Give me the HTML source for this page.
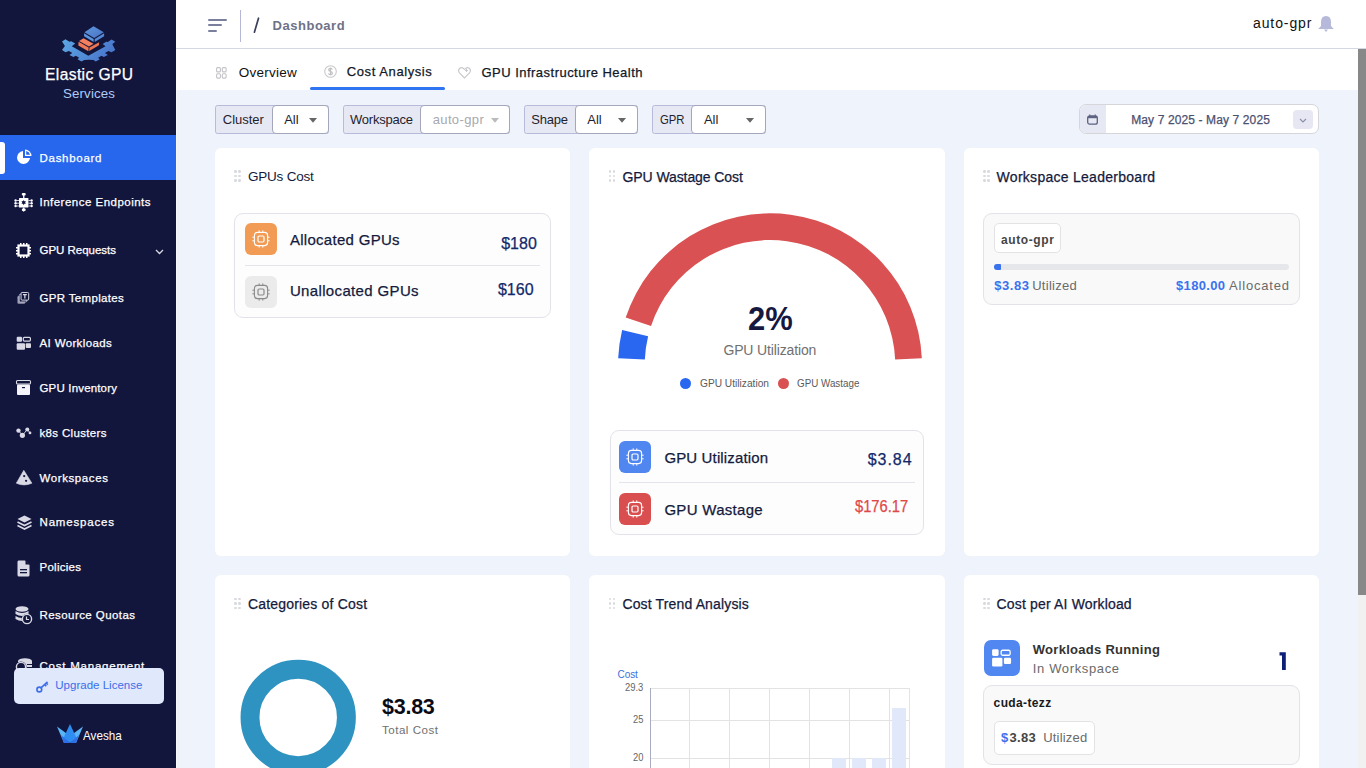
<!DOCTYPE html>
<html><head><meta charset="utf-8"><style>
html,body{margin:0;padding:0;width:1366px;height:768px;overflow:hidden;background:#eef3fc;font-family:"Liberation Sans",sans-serif;}
.t{position:absolute;line-height:1;white-space:nowrap;-webkit-text-stroke:0.25px currentColor;}
.thin{-webkit-text-stroke:0;}
.b{position:absolute;box-sizing:border-box;}
svg{position:absolute;overflow:visible;}
</style></head><body>
<div class="b" style="left:0px;top:0px;width:176px;height:768px;background:#13163c"></div>
<div class="b" style="left:176px;top:0px;width:1px;height:768px;background:#f7f9fd"></div>
<svg style="left:58px;top:22px" width="64" height="44" viewBox="0 0 1117 768">
<defs><linearGradient id="lg1" x1="0" y1="0" x2="1" y2="0.3"><stop offset="0" stop-color="#5ca6e4"/><stop offset="1" stop-color="#4a78cc"/></linearGradient>
<linearGradient id="lg2" x1="0" y1="0" x2="1" y2="1"><stop offset="0" stop-color="#5e98de"/><stop offset="1" stop-color="#4a72c4"/></linearGradient></defs>
<path d="M70 340 L130 300 L200 345 L230 335 L300 375 L240 425 L530 590 L830 425 L780 385 L840 345 L870 350 L935 305 L1000 345 L950 385 L955 400 L1000 490 L935 530 L880 505 L820 540 L870 575 L800 610 L760 590 L700 625 L730 650 L660 690 L620 665 L540 660 L460 665 L410 690 L340 650 L370 625 L310 590 L270 610 L200 575 L250 540 L190 505 L130 530 L70 490 L120 420 L110 400 Z" fill="url(#lg1)"/>
<path d="M360 345 L535 445 L530 510 L355 410 Z" fill="#f07a55"/>
<path d="M548 445 L718 352 L715 405 L545 505 Z" fill="#ea7350"/>
<path d="M368 330 L445 282 L620 378 L540 428 Z" fill="#f58060"/>
<path d="M455 195 L622 295 L622 350 L455 250 Z" fill="#5b94dc"/>
<path d="M640 295 L805 198 L805 250 L640 350 Z" fill="#5288d6"/>
<path d="M462 178 L620 72 L798 178 L632 280 Z" fill="url(#lg2)"/>
</svg>
<div class="t" style="left:45.00px;top:67.44px;font-size:15.6px;font-weight:400;color:#ffffff;letter-spacing:0.390px;">Elastic GPU</div>
<div class="t thin" style="left:63.00px;top:87.29px;font-size:13.3px;font-weight:400;color:#b0cbf6;letter-spacing:0.143px;">Services</div>
<div class="b" style="left:0px;top:135px;width:176px;height:45px;background:#2667ee"></div>
<div class="b" style="left:0px;top:142px;width:5px;height:32px;background:#ffffff;border-radius:0 3px 3px 0"></div>
<svg style="left:16px;top:149px" width="16" height="16" viewBox="0 0 16 16">
<path d="M7 2 A6.5 6.5 0 1 0 14 9 L7 9 Z" fill="#fff"/>
<path d="M9 0.5 L9 7 L15.5 7 A6.5 6.5 0 0 0 9 0.5 Z" fill="#fff"/>
<path d="M10.2 1.9 L10.2 5.8 L14.1 5.8 A5.3 5.3 0 0 0 10.2 1.9 Z" fill="#2667ee"/>
</svg>
<div class="t" style="left:39.50px;top:152.92px;font-size:11.5px;font-weight:400;color:#ffffff;letter-spacing:0.713px;">Dashboard</div>
<div class="t" style="left:39.50px;top:197.32px;font-size:11.5px;font-weight:400;color:#ffffff;letter-spacing:0.483px;">Inference Endpoints</div>
<div class="t" style="left:39.50px;top:244.72px;font-size:11.5px;font-weight:400;color:#ffffff;letter-spacing:-0.018px;">GPU Requests</div>
<div class="t" style="left:39.50px;top:292.62px;font-size:11.5px;font-weight:400;color:#ffffff;letter-spacing:0.333px;">GPR Templates</div>
<div class="t" style="left:39.50px;top:337.93px;font-size:11.5px;font-weight:400;color:#ffffff;letter-spacing:0.364px;">AI Workloads</div>
<div class="t" style="left:39.50px;top:382.93px;font-size:11.5px;font-weight:400;color:#ffffff;letter-spacing:0.167px;">GPU Inventory</div>
<div class="t" style="left:39.50px;top:427.93px;font-size:11.5px;font-weight:400;color:#ffffff;letter-spacing:0.336px;">k8s Clusters</div>
<div class="t" style="left:39.50px;top:473.03px;font-size:11.5px;font-weight:400;color:#ffffff;letter-spacing:0.600px;">Workspaces</div>
<div class="t" style="left:39.50px;top:517.23px;font-size:11.5px;font-weight:400;color:#ffffff;letter-spacing:0.822px;">Namespaces</div>
<div class="t" style="left:39.50px;top:561.93px;font-size:11.5px;font-weight:400;color:#ffffff;letter-spacing:0.271px;">Policies</div>
<div class="t" style="left:39.50px;top:610.13px;font-size:11.5px;font-weight:400;color:#ffffff;letter-spacing:0.429px;">Resource Quotas</div>
<div class="t" style="left:39.50px;top:661.43px;font-size:11.5px;font-weight:400;color:#ffffff;letter-spacing:0.771px;">Cost Management</div>
<svg style="left:14px;top:193px" width="19" height="19" viewBox="0 0 19 19">
<rect x="5" y="5" width="9.4" height="9.6" rx="0.6" fill="#fff"/>
<path d="M9.7 6.9 L10.4 8.2 L11.8 8.1 L11.2 9.5 L11.9 10.8 L10.4 10.8 L9.7 12.2 L9 10.8 L7.5 10.8 L8.2 9.5 L7.5 8.1 L9 8.2 Z" fill="#13163c"/>
<rect x="7.8" y="0" width="3.9" height="2.5" rx="1" fill="#fff"/><rect x="9.1" y="2" width="1.3" height="3" fill="#fff"/>
<rect x="9.1" y="14.5" width="1.3" height="1.5" fill="#fff"/><rect x="7.8" y="15.6" width="3.9" height="2.4" rx="1.1" fill="#fff"/><path d="M8.9 17.8 L9.75 19 L10.6 17.8 Z" fill="#fff"/>
<circle cx="1.6" cy="7.5" r="1.2" fill="#fff"/><circle cx="1.6" cy="10.2" r="1.2" fill="#fff"/><circle cx="1.6" cy="13" r="1.2" fill="#fff"/>
<circle cx="17.6" cy="7.5" r="1.2" fill="#fff"/><circle cx="17.6" cy="10.2" r="1.2" fill="#fff"/><circle cx="17.6" cy="13" r="1.2" fill="#fff"/>
<path d="M2.6 7.5 H5 M2.8 10.2 H5 M2.6 13 H5 M16.6 7.5 H14.4 M16.4 10.2 H14.4 M16.6 13 H14.4" stroke="#fff" stroke-width="0.8"/>
</svg>
<svg style="left:16px;top:243px" width="15" height="15" viewBox="0 0 15 15">
<rect x="2.5" y="2.5" width="10" height="10" fill="none" stroke="#ffffff" stroke-width="2.2"/>
<rect x="4" y="0" width="1.5" height="2" fill="#ffffff"/><rect x="7" y="0" width="1.5" height="2" fill="#ffffff"/><rect x="10" y="0" width="1.5" height="2" fill="#ffffff"/>
<rect x="4" y="13" width="1.5" height="2" fill="#ffffff"/><rect x="7" y="13" width="1.5" height="2" fill="#ffffff"/><rect x="10" y="13" width="1.5" height="2" fill="#ffffff"/>
<rect x="0" y="4" width="2" height="1.5" fill="#ffffff"/><rect x="0" y="7" width="2" height="1.5" fill="#ffffff"/><rect x="0" y="10" width="2" height="1.5" fill="#ffffff"/>
<rect x="13" y="4" width="2" height="1.5" fill="#ffffff"/><rect x="13" y="7" width="2" height="1.5" fill="#ffffff"/><rect x="13" y="10" width="2" height="1.5" fill="#ffffff"/>
</svg>
<svg style="left:155px;top:249px" width="9" height="6" viewBox="0 0 9 6"><path d="M1 1 L4.5 4.5 L8 1" fill="none" stroke="#d9d9e6" stroke-width="1.3"/></svg>
<svg style="left:17px;top:291.5px" width="12.6" height="13" viewBox="0 0 14 14.4">
<rect x="0.5" y="4.5" width="8.5" height="8.5" rx="1.2" fill="#9c9cb4"/>
<rect x="2.5" y="2.5" width="8.5" height="8.5" rx="1.2" fill="#13163c" stroke="#b8b8cc" stroke-width="1"/>
<rect x="4.5" y="0.5" width="8.5" height="8.5" rx="1.2" fill="#13163c" stroke="#d9d9e6" stroke-width="1.1"/>
<path d="M6.6 3 H10.9 M8.75 3 V7.2" stroke="#d9d9e6" stroke-width="1.4"/>
</svg>
<svg style="left:16px;top:336px" width="16" height="15" viewBox="0 0 16 15">
<rect x="0.7" y="0.7" width="5.3" height="5" rx="1" fill="#d9d9e6"/>
<rect x="7.3" y="1.3" width="7.1" height="3.8" rx="1" fill="none" stroke="#d9d9e6" stroke-width="1.2"/>
<rect x="0.7" y="7.2" width="8.3" height="6.6" rx="1" fill="#d9d9e6"/>
<rect x="9.7" y="7.2" width="5.3" height="4.8" rx="1" fill="#d9d9e6"/>
</svg>
<svg style="left:16px;top:380px" width="15" height="15" viewBox="0 0 15 15">
<rect x="0.5" y="0.5" width="14" height="3.5" rx="1" fill="none" stroke="#d9d9e6" stroke-width="1.1"/>
<rect x="1" y="4.5" width="13" height="10.5" rx="1" fill="#f4f4fa"/>
<rect x="6" y="7" width="3" height="1.2" fill="#13163c"/>
</svg>
<svg style="left:16px;top:427px" width="16" height="12" viewBox="0 0 16 12">
<path d="M2.5 3.6 L6.4 8.3 L11.3 2.4 L14 5.9" fill="none" stroke="#d9d9e6" stroke-width="0.9"/>
<circle cx="2.5" cy="3.6" r="2.2" fill="#d9d9e6"/><circle cx="6.4" cy="8.3" r="2.6" fill="#d9d9e6"/><circle cx="11.3" cy="2.4" r="2" fill="#d9d9e6"/><circle cx="14" cy="5.9" r="1.4" fill="#d9d9e6"/>
</svg>
<svg style="left:15.5px;top:469.5px" width="16" height="16" viewBox="0 0 16 16">
<path d="M7.8 0.3 L15.9 13.2 Q8 16.6 0.3 13.2 Z" fill="#d9d9e6" stroke="#d9d9e6" stroke-width="0.6" stroke-linejoin="round"/>
<circle cx="8.2" cy="6.1" r="1.15" fill="#13163c"/><circle cx="10.1" cy="10.8" r="1.15" fill="#13163c"/>
</svg>
<svg style="left:16.5px;top:514.5px" width="15" height="15" viewBox="0 0 15 15">
<path d="M7.5 0.5 L14.5 4 L7.5 7.5 L0.5 4 Z" fill="#d9d9e6"/>
<path d="M0.5 7 L7.5 10.5 L14.5 7" fill="none" stroke="#d9d9e6" stroke-width="1.6"/>
<path d="M0.5 10.5 L7.5 14 L14.5 10.5" fill="none" stroke="#d9d9e6" stroke-width="1.6"/>
</svg>
<svg style="left:17px;top:559.5px" width="13" height="17" viewBox="0 0 13 17">
<path d="M1.5 0.5 H8 L12.5 5 V15 Q12.5 16.5 11 16.5 H2 Q0.5 16.5 0.5 15 V2 Q0.5 0.5 1.5 0.5 Z" fill="#d9d9e6"/>
<path d="M8.5 0.5 V4.5 H12.5" fill="#13163c"/>
<rect x="3" y="9" width="7" height="1.3" fill="#13163c"/><rect x="3" y="12" width="7" height="1.3" fill="#13163c"/>
</svg>
<svg style="left:14.5px;top:606px" width="18" height="19" viewBox="0 0 18 19">
<ellipse cx="7" cy="3" rx="6.5" ry="2.8" fill="#d9d9e6"/>
<path d="M0.5 5 Q7 9 13.5 5 V8 Q7 12 0.5 8 Z" fill="#d9d9e6"/>
<path d="M0.5 10 Q7 14 13.5 10 V13 Q7 17 0.5 13 Z" fill="#d9d9e6"/>
<circle cx="12" cy="13" r="5.3" fill="#13163c"/>
<circle cx="12" cy="13" r="4.6" fill="none" stroke="#d9d9e6" stroke-width="1.4"/>
<path d="M11.5 10.5 V13.5 H14" fill="none" stroke="#d9d9e6" stroke-width="1.2"/>
</svg>
<svg style="left:15px;top:658px" width="18" height="12" viewBox="0 0 18 12">
<ellipse cx="10" cy="3" rx="7" ry="2.8" fill="#d9d9e6"/>
<rect x="3" y="3" width="14" height="9" fill="#d9d9e6"/>
<circle cx="6" cy="9" r="5.5" fill="#13163c"/><circle cx="6" cy="9" r="4.6" fill="none" stroke="#d9d9e6" stroke-width="1.4"/>
<rect x="12" y="6" width="5" height="1" fill="#13163c"/><rect x="12" y="9" width="5" height="1" fill="#13163c"/>
</svg>
<div class="b" style="left:14px;top:668px;width:150px;height:36px;background:#e0e8fc;border-radius:5px"></div>
<svg style="left:35.5px;top:680.5px" width="13" height="12" viewBox="0 0 13 12">
<circle cx="3.3" cy="8.5" r="2.4" fill="none" stroke="#3b6ee8" stroke-width="1.6"/>
<path d="M5 6.8 L11.5 0.8 M8.5 3.5 L10.3 5.3 M10.2 2 L11.8 3.6" fill="none" stroke="#3b6ee8" stroke-width="1.6"/>
</svg>
<div class="t thin" style="left:55.30px;top:680.02px;font-size:11.5px;font-weight:400;color:#3b6ee8;letter-spacing:0.007px;">Upgrade License</div>
<svg style="left:56.5px;top:723.5px" width="26" height="20" viewBox="0 0 26 20">
<path d="M0 2.5 L7 19 L13 12 Z" fill="#5ab4f5"/>
<path d="M26 2.5 L19 19 L13 12 Z" fill="#5ab4f5"/>
<path d="M13 0 L6.5 14 L13 19 L19.5 14 Z" fill="#2f8cf0"/>
<path d="M4 11 L13 19 L22 11 L19 19 H7 Z" fill="#2f6fe8"/>
</svg>
<div class="t thin" style="left:82.50px;top:728.95px;font-size:13px;font-weight:400;color:#ffffff;letter-spacing:0.000px;transform:scaleX(0.8981);transform-origin:0.00px 0;">Avesha</div>
<div class="b" style="left:176px;top:0px;width:1190px;height:48px;background:#ffffff"></div>
<div class="b" style="left:176px;top:48px;width:1190px;height:1px;background:#d5d8e2"></div>
<div class="b" style="left:208px;top:18.6px;width:19px;height:2px;background:#7b7f9e;border-radius:1.5px"></div>
<div class="b" style="left:208px;top:24.1px;width:14px;height:2px;background:#7b7f9e;border-radius:1.5px"></div>
<div class="b" style="left:208px;top:29.5px;width:9.3px;height:2px;background:#7b7f9e;border-radius:1.5px"></div>
<div class="b" style="left:240px;top:10px;width:1px;height:32px;background:#b4b8d4"></div>
<svg style="left:252px;top:16px" width="9" height="18" viewBox="0 0 9 18"><path d="M6.5 2.2 L2.4 16.2" stroke="#3a3f5c" stroke-width="1.7" stroke-linecap="round"/></svg>
<div class="t thin" style="left:272.60px;top:18.95px;font-size:13px;font-weight:700;color:#6e7287;letter-spacing:0.512px;">Dashboard</div>
<div class="t thin" style="left:1253.00px;top:15.90px;font-size:14px;font-weight:400;color:#111111;letter-spacing:0.900px;">auto-gpr</div>
<svg style="left:1318px;top:16px" width="16" height="16" viewBox="0 0 16 16">
<path d="M8 0 Q3 0 3 6 V10 L0.2 13 H15.8 L13 10 V6 Q13 0 8 0 Z" fill="#b6b9da"/>
<path d="M6 13.5 H10 L8 16 Z" fill="#b6b9da"/>
</svg>
<div class="b" style="left:176px;top:49px;width:1182px;height:41px;background:#ffffff"></div>
<svg style="left:215.5px;top:67px" width="11" height="12" viewBox="0 0 11 12">
<rect x="0.6" y="0.6" width="3.8" height="4.3" rx="1" fill="none" stroke="#c4c4c8" stroke-width="1.1"/>
<rect x="6.3" y="0.6" width="3.8" height="4.3" rx="1" fill="none" stroke="#c4c4c8" stroke-width="1.1"/>
<rect x="0.6" y="6.8" width="3.8" height="4.3" rx="1" fill="none" stroke="#c4c4c8" stroke-width="1.1"/>
<rect x="6.3" y="6.8" width="3.8" height="4.3" rx="1" fill="none" stroke="#c4c4c8" stroke-width="1.1"/>
</svg>
<div class="t thin" style="left:238.70px;top:65.93px;font-size:13.5px;font-weight:400;color:#111111;letter-spacing:0.243px;">Overview</div>
<svg style="left:323.5px;top:64.5px" width="13" height="13" viewBox="0 0 13 13">
<circle cx="6.5" cy="6.5" r="5.8" fill="none" stroke="#c9c9cd" stroke-width="1.1"/>
<path d="M8.3 4.6 Q8 3.4 6.5 3.4 Q4.7 3.4 4.7 4.8 Q4.7 6 6.5 6.4 Q8.4 6.9 8.4 8.2 Q8.4 9.6 6.5 9.6 Q4.8 9.6 4.5 8.3 M6.5 2.4 V10.6" fill="none" stroke="#bfbfc4" stroke-width="1.2"/>
</svg>
<div class="t" style="left:346.80px;top:64.75px;font-size:13px;font-weight:400;color:#111827;letter-spacing:0.583px;">Cost Analysis</div>
<div class="b" style="left:310px;top:87px;width:135px;height:3px;background:#2f74f0;border-radius:2px"></div>
<svg style="left:457.5px;top:67px" width="13" height="12" viewBox="0 0 13 12">
<path d="M6.5 11 L1.5 6 Q-0.5 3.5 1.5 1.5 Q4 -0.5 6.5 2.5 Q9 -0.5 11.5 1.5 Q13.5 3.5 11.5 6 Z" fill="none" stroke="#c8c8cc" stroke-width="1.1"/>
<path d="M8.5 2 V5 M7 3.5 H10" stroke="#c8c8cc" stroke-width="1"/>
</svg>
<div class="t" style="left:481.50px;top:66.15px;font-size:13px;font-weight:400;color:#111827;letter-spacing:0.475px;">GPU Infrastructure Health</div>
<div class="b" style="left:1358px;top:49px;width:8px;height:719px;background:#f1f1f1"></div>
<div class="b" style="left:1358px;top:49px;width:8px;height:546px;background:#888888"></div>
<div class="b" style="left:215px;top:105px;width:114px;height:28.5px;background:#e6e8f3;border:1px solid #b8badb;border-radius:2.5px"></div>
<div class="b" style="left:271.5px;top:105px;width:57.5px;height:28.5px;background:#ffffff;border:1px solid #a4a6bc;border-radius:4px"></div>
<div class="t thin" style="left:222.80px;top:112.75px;font-size:13px;font-weight:400;color:#1e1e2e;letter-spacing:-0.033px;">Cluster</div>
<div class="t thin" style="left:284.20px;top:112.75px;font-size:13px;font-weight:400;color:#1e1e2e;letter-spacing:-0.050px;">All</div>
<svg style="left:309.4px;top:117.5px" width="8" height="5" viewBox="0 0 8 5"><path d="M0 0 H8 L4 4.8 Z" fill="#666666"/></svg>
<div class="b" style="left:343px;top:105px;width:167px;height:28.5px;background:#e6e8f3;border:1px solid #b8badb;border-radius:2.5px"></div>
<div class="b" style="left:420px;top:105px;width:90px;height:28.5px;background:#ffffff;border:1px solid #a4a6bc;border-radius:4px"></div>
<div class="t thin" style="left:350.00px;top:112.75px;font-size:13px;font-weight:400;color:#1e1e2e;letter-spacing:-0.225px;">Workspace</div>
<div class="t thin" style="left:432.70px;top:112.75px;font-size:13px;font-weight:400;color:#a8a8b0;letter-spacing:0.371px;">auto-gpr</div>
<svg style="left:490.5px;top:117.5px" width="8" height="5" viewBox="0 0 8 5"><path d="M0 0 H8 L4 4.8 Z" fill="#bbbbbb"/></svg>
<div class="b" style="left:524.2px;top:105px;width:114.0px;height:28.5px;background:#e6e8f3;border:1px solid #b8badb;border-radius:2.5px"></div>
<div class="b" style="left:575.3px;top:105px;width:62.90000000000009px;height:28.5px;background:#ffffff;border:1px solid #a4a6bc;border-radius:4px"></div>
<div class="t thin" style="left:531.20px;top:112.75px;font-size:13px;font-weight:400;color:#1e1e2e;letter-spacing:-0.200px;">Shape</div>
<div class="t thin" style="left:587.30px;top:112.75px;font-size:13px;font-weight:400;color:#1e1e2e;letter-spacing:-0.050px;">All</div>
<svg style="left:618.3px;top:117.5px" width="8" height="5" viewBox="0 0 8 5"><path d="M0 0 H8 L4 4.8 Z" fill="#666666"/></svg>
<div class="b" style="left:652.2px;top:105px;width:113.79999999999995px;height:28.5px;background:#e6e8f3;border:1px solid #b8badb;border-radius:2.5px"></div>
<div class="b" style="left:691.3px;top:105px;width:74.70000000000005px;height:28.5px;background:#ffffff;border:1px solid #a4a6bc;border-radius:4px"></div>
<div class="t thin" style="left:659.50px;top:112.75px;font-size:13px;font-weight:400;color:#1e1e2e;letter-spacing:0.000px;transform:scaleX(0.8688);transform-origin:0.00px 0;">GPR</div>
<div class="t thin" style="left:704.00px;top:112.75px;font-size:13px;font-weight:400;color:#1e1e2e;letter-spacing:-0.050px;">All</div>
<svg style="left:745.6px;top:117.5px" width="8" height="5" viewBox="0 0 8 5"><path d="M0 0 H8 L4 4.8 Z" fill="#666666"/></svg>
<div class="b" style="left:1079px;top:104px;width:240px;height:30px;background:#ffffff;border:1px solid #d6d6da;border-radius:7px"></div>
<div class="b" style="left:1080px;top:105px;width:26px;height:28px;background:#e6e8f3;border-radius:6px 0 0 6px"></div>
<svg style="left:1087px;top:114px" width="11" height="11" viewBox="0 0 11 11">
<rect x="0.7" y="1.8" width="9.6" height="8.4" rx="2" fill="none" stroke="#5d6282" stroke-width="1.3"/>
<rect x="1" y="2" width="9" height="2.2" fill="#5d6282"/>
<path d="M2.8 0.3 V2.5 M8.2 0.3 V2.5" stroke="#5d6282" stroke-width="0.9"/>
</svg>
<div class="t" style="left:1131.20px;top:113.90px;font-size:12px;font-weight:400;color:#4b5070;letter-spacing:0.118px;">May 7 2025 - May 7 2025</div>
<div class="b" style="left:1293px;top:110px;width:19.7px;height:18.6px;background:#e6e7f3;border-radius:4px"></div>
<svg style="left:1299px;top:117.5px" width="8" height="5" viewBox="0 0 8 5"><path d="M1 1 L4 4 L7 1" fill="none" stroke="#8a8ea8" stroke-width="1.1"/></svg>
<div class="b" style="left:215px;top:148px;width:355.3px;height:408px;background:#ffffff;border-radius:6px"></div>
<div class="b" style="left:589.3px;top:148px;width:355.3px;height:408px;background:#ffffff;border-radius:6px"></div>
<div class="b" style="left:963.7px;top:148px;width:355.3px;height:408px;background:#ffffff;border-radius:6px"></div>
<div class="b" style="left:215px;top:575px;width:355.3px;height:200px;background:#ffffff;border-radius:6px"></div>
<div class="b" style="left:589.3px;top:575px;width:355.3px;height:200px;background:#ffffff;border-radius:6px"></div>
<div class="b" style="left:963.7px;top:575px;width:355.3px;height:200px;background:#ffffff;border-radius:6px"></div>
<div class="b" style="left:234.0px;top:170.3px;width:2.6px;height:2.6px;background:#d9dbe1;border-radius:50%"></div>
<div class="b" style="left:238.4px;top:170.3px;width:2.6px;height:2.6px;background:#d9dbe1;border-radius:50%"></div>
<div class="b" style="left:234.0px;top:174.8px;width:2.6px;height:2.6px;background:#d9dbe1;border-radius:50%"></div>
<div class="b" style="left:238.4px;top:174.8px;width:2.6px;height:2.6px;background:#d9dbe1;border-radius:50%"></div>
<div class="b" style="left:234.0px;top:179.3px;width:2.6px;height:2.6px;background:#d9dbe1;border-radius:50%"></div>
<div class="b" style="left:238.4px;top:179.3px;width:2.6px;height:2.6px;background:#d9dbe1;border-radius:50%"></div>
<div class="t thin" style="left:248.00px;top:169.53px;font-size:13.5px;font-weight:400;color:#141a3c;letter-spacing:-0.213px;">GPUs Cost</div>
<div class="b" style="left:608.5px;top:170.3px;width:2.6px;height:2.6px;background:#d9dbe1;border-radius:50%"></div>
<div class="b" style="left:612.9px;top:170.3px;width:2.6px;height:2.6px;background:#d9dbe1;border-radius:50%"></div>
<div class="b" style="left:608.5px;top:174.8px;width:2.6px;height:2.6px;background:#d9dbe1;border-radius:50%"></div>
<div class="b" style="left:612.9px;top:174.8px;width:2.6px;height:2.6px;background:#d9dbe1;border-radius:50%"></div>
<div class="b" style="left:608.5px;top:179.3px;width:2.6px;height:2.6px;background:#d9dbe1;border-radius:50%"></div>
<div class="b" style="left:612.9px;top:179.3px;width:2.6px;height:2.6px;background:#d9dbe1;border-radius:50%"></div>
<div class="t" style="left:622.50px;top:169.60px;font-size:14px;font-weight:400;color:#141a3c;letter-spacing:-0.087px;">GPU Wastage Cost</div>
<div class="b" style="left:983.0px;top:170.3px;width:2.6px;height:2.6px;background:#d9dbe1;border-radius:50%"></div>
<div class="b" style="left:987.4px;top:170.3px;width:2.6px;height:2.6px;background:#d9dbe1;border-radius:50%"></div>
<div class="b" style="left:983.0px;top:174.8px;width:2.6px;height:2.6px;background:#d9dbe1;border-radius:50%"></div>
<div class="b" style="left:987.4px;top:174.8px;width:2.6px;height:2.6px;background:#d9dbe1;border-radius:50%"></div>
<div class="b" style="left:983.0px;top:179.3px;width:2.6px;height:2.6px;background:#d9dbe1;border-radius:50%"></div>
<div class="b" style="left:987.4px;top:179.3px;width:2.6px;height:2.6px;background:#d9dbe1;border-radius:50%"></div>
<div class="t" style="left:996.60px;top:169.70px;font-size:14px;font-weight:400;color:#141a3c;letter-spacing:0.275px;">Workspace Leaderboard</div>
<div class="b" style="left:234.0px;top:597.5px;width:2.6px;height:2.6px;background:#d9dbe1;border-radius:50%"></div>
<div class="b" style="left:238.4px;top:597.5px;width:2.6px;height:2.6px;background:#d9dbe1;border-radius:50%"></div>
<div class="b" style="left:234.0px;top:602.0px;width:2.6px;height:2.6px;background:#d9dbe1;border-radius:50%"></div>
<div class="b" style="left:238.4px;top:602.0px;width:2.6px;height:2.6px;background:#d9dbe1;border-radius:50%"></div>
<div class="b" style="left:234.0px;top:606.5px;width:2.6px;height:2.6px;background:#d9dbe1;border-radius:50%"></div>
<div class="b" style="left:238.4px;top:606.5px;width:2.6px;height:2.6px;background:#d9dbe1;border-radius:50%"></div>
<div class="t" style="left:248.00px;top:596.60px;font-size:14px;font-weight:400;color:#141a3c;letter-spacing:0.182px;">Categories of Cost</div>
<div class="b" style="left:608.5px;top:597.5px;width:2.6px;height:2.6px;background:#d9dbe1;border-radius:50%"></div>
<div class="b" style="left:612.9px;top:597.5px;width:2.6px;height:2.6px;background:#d9dbe1;border-radius:50%"></div>
<div class="b" style="left:608.5px;top:602.0px;width:2.6px;height:2.6px;background:#d9dbe1;border-radius:50%"></div>
<div class="b" style="left:612.9px;top:602.0px;width:2.6px;height:2.6px;background:#d9dbe1;border-radius:50%"></div>
<div class="b" style="left:608.5px;top:606.5px;width:2.6px;height:2.6px;background:#d9dbe1;border-radius:50%"></div>
<div class="b" style="left:612.9px;top:606.5px;width:2.6px;height:2.6px;background:#d9dbe1;border-radius:50%"></div>
<div class="t" style="left:622.40px;top:596.80px;font-size:14px;font-weight:400;color:#141a3c;letter-spacing:0.150px;">Cost Trend Analysis</div>
<div class="b" style="left:983.0px;top:597.5px;width:2.6px;height:2.6px;background:#d9dbe1;border-radius:50%"></div>
<div class="b" style="left:987.4px;top:597.5px;width:2.6px;height:2.6px;background:#d9dbe1;border-radius:50%"></div>
<div class="b" style="left:983.0px;top:602.0px;width:2.6px;height:2.6px;background:#d9dbe1;border-radius:50%"></div>
<div class="b" style="left:987.4px;top:602.0px;width:2.6px;height:2.6px;background:#d9dbe1;border-radius:50%"></div>
<div class="b" style="left:983.0px;top:606.5px;width:2.6px;height:2.6px;background:#d9dbe1;border-radius:50%"></div>
<div class="b" style="left:987.4px;top:606.5px;width:2.6px;height:2.6px;background:#d9dbe1;border-radius:50%"></div>
<div class="t" style="left:996.60px;top:596.70px;font-size:14px;font-weight:400;color:#141a3c;letter-spacing:0.158px;">Cost per AI Workload</div>
<div class="b" style="left:234.4px;top:213.3px;width:316.3px;height:104.5px;background:#fdfdfd;border:1px solid #e2e3ea;border-radius:9px"></div>
<div class="b" style="left:245px;top:223px;width:32px;height:32px;background:#f19b55;border-radius:6px"></div>
<svg style="left:252px;top:230px" width="18" height="18" viewBox="0 0 18 18">
<rect x="2.4" y="2.4" width="13.2" height="13.2" rx="3" fill="none" stroke="#ffffff" stroke-width="1.1"/>
<rect x="6" y="6" width="6" height="6" rx="1.2" fill="none" stroke="#ffffff" stroke-width="1.2"/>
<path d="M7.2 0.4 V2 M10.8 0.4 V2 M7.2 16 V17.6 M10.8 16 V17.6 M0.4 7.2 H2 M0.4 10.8 H2 M16 7.2 H17.6 M16 10.8 H17.6" stroke="#ffffff" stroke-width="1"/>
</svg>
<div class="t" style="left:289.90px;top:231.95px;font-size:15px;font-weight:400;color:#141a3c;letter-spacing:0.292px;">Allocated GPUs</div>
<div class="t" style="left:501.20px;top:235.70px;font-size:16px;font-weight:400;color:#13296b;letter-spacing:0.033px;">$180</div>
<div class="b" style="left:245px;top:265px;width:295px;height:1px;background:#e4e5ea"></div>
<div class="b" style="left:245px;top:275.8px;width:32px;height:32px;background:#ebebeb;border-radius:6px"></div>
<svg style="left:252px;top:282.8px" width="18" height="18" viewBox="0 0 18 18">
<rect x="2.4" y="2.4" width="13.2" height="13.2" rx="3" fill="none" stroke="#8a8a8a" stroke-width="1.1"/>
<rect x="6" y="6" width="6" height="6" rx="1.2" fill="none" stroke="#8a8a8a" stroke-width="1.2"/>
<path d="M7.2 0.4 V2 M10.8 0.4 V2 M7.2 16 V17.6 M10.8 16 V17.6 M0.4 7.2 H2 M0.4 10.8 H2 M16 7.2 H17.6 M16 10.8 H17.6" stroke="#8a8a8a" stroke-width="1"/>
</svg>
<div class="t" style="left:289.90px;top:283.35px;font-size:15px;font-weight:400;color:#141a3c;letter-spacing:0.353px;">Unallocated GPUs</div>
<div class="t" style="left:497.90px;top:281.70px;font-size:16px;font-weight:400;color:#13296b;letter-spacing:0.067px;">$160</div>
<svg style="left:0;top:0" width="1366" height="768" viewBox="0 0 1366 768">
<path d="M625.69 317.57 A152 152 0 0 1 921.83 358.14 L895.16 359.40 A125.3 125.3 0 0 0 651.04 325.96 Z" fill="#d95152"/>
<path d="M618.17 358.14 A152 152 0 0 1 622.14 330.07 L648.11 336.26 A125.3 125.3 0 0 0 644.84 359.40 Z" fill="#2a67f0"/>
</svg>
<div class="t thin" style="left:747.50px;top:301.95px;font-size:33px;font-weight:700;color:#16193f;letter-spacing:0.000px;transform:scaleX(0.9371);transform-origin:0.00px 0;">2%</div>
<div class="t thin" style="left:723.40px;top:342.70px;font-size:14px;font-weight:400;color:#707070;letter-spacing:-0.136px;">GPU Utilization</div>
<div class="b" style="left:680.1px;top:377.6px;width:11px;height:11px;background:#2a67f0;border-radius:50%"></div>
<div class="t thin" style="left:699.60px;top:378.25px;font-size:11px;font-weight:400;color:#5a5a5a;letter-spacing:0.000px;transform:scaleX(0.9249);transform-origin:0.00px 0;">GPU Utilization</div>
<div class="b" style="left:777.5px;top:377.6px;width:11px;height:11px;background:#d95152;border-radius:50%"></div>
<div class="t thin" style="left:796.90px;top:378.25px;font-size:11px;font-weight:400;color:#5a5a5a;letter-spacing:0.000px;transform:scaleX(0.8927);transform-origin:0.00px 0;">GPU Wastage</div>
<div class="b" style="left:609.6px;top:430.2px;width:314.8px;height:105.3px;background:#fdfdfd;border:1px solid #e2e3ea;border-radius:9px"></div>
<div class="b" style="left:619.2px;top:441.2px;width:32px;height:32px;background:#4f86f0;border-radius:6px"></div>
<svg style="left:626.2px;top:448.2px" width="18" height="18" viewBox="0 0 18 18">
<rect x="2.4" y="2.4" width="13.2" height="13.2" rx="3" fill="none" stroke="#ffffff" stroke-width="1.1"/>
<rect x="6" y="6" width="6" height="6" rx="1.2" fill="none" stroke="#ffffff" stroke-width="1.2"/>
<path d="M7.2 0.4 V2 M10.8 0.4 V2 M7.2 16 V17.6 M10.8 16 V17.6 M0.4 7.2 H2 M0.4 10.8 H2 M16 7.2 H17.6 M16 10.8 H17.6" stroke="#ffffff" stroke-width="1"/>
</svg>
<div class="t" style="left:664.40px;top:450.05px;font-size:15px;font-weight:400;color:#141a3c;letter-spacing:0.136px;">GPU Utilization</div>
<div class="t" style="left:867.70px;top:452.40px;font-size:16px;font-weight:400;color:#13296b;letter-spacing:0.975px;">$3.84</div>
<div class="b" style="left:619px;top:482px;width:296px;height:1px;background:#e4e5ea"></div>
<div class="b" style="left:619.2px;top:493px;width:32px;height:32px;background:#d94f4f;border-radius:6px"></div>
<svg style="left:626.2px;top:500px" width="18" height="18" viewBox="0 0 18 18">
<rect x="2.4" y="2.4" width="13.2" height="13.2" rx="3" fill="none" stroke="#ffffff" stroke-width="1.1"/>
<rect x="6" y="6" width="6" height="6" rx="1.2" fill="none" stroke="#ffffff" stroke-width="1.2"/>
<path d="M7.2 0.4 V2 M10.8 0.4 V2 M7.2 16 V17.6 M10.8 16 V17.6 M0.4 7.2 H2 M0.4 10.8 H2 M16 7.2 H17.6 M16 10.8 H17.6" stroke="#ffffff" stroke-width="1"/>
</svg>
<div class="t" style="left:664.40px;top:501.65px;font-size:15px;font-weight:400;color:#141a3c;letter-spacing:0.300px;">GPU Wastage</div>
<div class="t" style="left:855.40px;top:498.60px;font-size:16px;font-weight:400;color:#e04848;letter-spacing:0.000px;transform:scaleX(0.9170);transform-origin:0.00px 0;">$176.17</div>
<div class="b" style="left:983.2px;top:213.4px;width:316.5px;height:92.1px;background:#f9f9fa;border:1px solid #e2e3e8;border-radius:9px"></div>
<div class="b" style="left:994.2px;top:223.2px;width:66.5px;height:30.3px;background:#ffffff;border:1px solid #e3e3e6;border-radius:5px"></div>
<div class="t thin" style="left:1001.00px;top:233.80px;font-size:12px;font-weight:700;color:#454545;letter-spacing:0.600px;">auto-gpr</div>
<div class="b" style="left:994.2px;top:264px;width:294.8px;height:6px;background:#e5e7eb;border-radius:3px"></div>
<div class="b" style="left:994.2px;top:264px;width:6.5px;height:6px;background:#3b72ee;border-radius:3px 1px 1px 3px"></div>
<div class="t thin" style="left:994.20px;top:278.95px;font-size:13px;font-weight:700;color:#3b72ee;letter-spacing:0.575px;">$3.83</div>
<div class="t thin" style="left:1032.20px;top:278.95px;font-size:13px;font-weight:400;color:#6a6a6a;letter-spacing:0.286px;">Utilized</div>
<div class="t thin" style="left:1176.00px;top:278.95px;font-size:13px;font-weight:700;color:#3b72ee;letter-spacing:0.350px;">$180.00</div>
<div class="t thin" style="left:1229.00px;top:278.95px;font-size:13px;font-weight:400;color:#6a6a6a;letter-spacing:0.812px;">Allocated</div>
<svg style="left:0;top:0" width="1366" height="768" viewBox="0 0 1366 768"><circle cx="298.2" cy="717.4" r="48.2" fill="none" stroke="#2e93c0" stroke-width="18.9"/></svg>
<div class="t thin" style="left:382.00px;top:696.93px;font-size:21.5px;font-weight:700;color:#0a0a14;letter-spacing:-0.250px;">$3.83</div>
<div class="t thin" style="left:382.00px;top:724.14px;font-size:11.6px;font-weight:400;color:#707070;letter-spacing:0.489px;">Total Cost</div>
<div class="t thin" style="left:617.60px;top:670.10px;font-size:10px;font-weight:400;color:#3b6fe0;letter-spacing:-0.100px;">Cost</div>
<div class="t thin" style="left:624.60px;top:682.90px;font-size:10px;font-weight:400;color:#666666;letter-spacing:0.000px;transform:scaleX(0.9436);transform-origin:0.00px 0;">29.3</div>
<div class="t thin" style="left:632.60px;top:714.60px;font-size:10px;font-weight:400;color:#666666;letter-spacing:0.000px;transform:scaleX(0.9369);transform-origin:0.00px 0;">25</div>
<div class="t thin" style="left:632.60px;top:752.50px;font-size:10px;font-weight:400;color:#666666;letter-spacing:0.000px;transform:scaleX(0.9369);transform-origin:0.00px 0;">20</div>
<div class="b" style="left:650px;top:688px;width:260px;height:1px;background:#e3e3e3"></div>
<div class="b" style="left:650px;top:720px;width:260px;height:1px;background:#e3e3e3"></div>
<div class="b" style="left:650px;top:758px;width:260px;height:1px;background:#e3e3e3"></div>
<div class="b" style="left:689px;top:688px;width:1px;height:100px;background:#e3e3e3"></div>
<div class="b" style="left:729px;top:688px;width:1px;height:100px;background:#e3e3e3"></div>
<div class="b" style="left:769px;top:688px;width:1px;height:100px;background:#e3e3e3"></div>
<div class="b" style="left:809px;top:688px;width:1px;height:100px;background:#e3e3e3"></div>
<div class="b" style="left:849px;top:688px;width:1px;height:100px;background:#e3e3e3"></div>
<div class="b" style="left:889px;top:688px;width:1px;height:100px;background:#e3e3e3"></div>
<div class="b" style="left:909px;top:688px;width:1px;height:100px;background:#e3e3e3"></div>
<div class="b" style="left:832.2px;top:757.9px;width:14px;height:20px;background:#e1e8fa"></div>
<div class="b" style="left:852.2px;top:757.9px;width:14px;height:20px;background:#e1e8fa"></div>
<div class="b" style="left:872.3px;top:757.9px;width:14px;height:20px;background:#e1e8fa"></div>
<div class="b" style="left:892.3px;top:708.2px;width:13.5px;height:70px;background:#e1e8fa"></div>
<div class="b" style="left:649.5px;top:688px;width:1.6px;height:100px;background:#a9acbf"></div>
<div class="b" style="left:983.5px;top:640px;width:36px;height:35.8px;background:#5087f0;border-radius:7px"></div>
<svg style="left:991px;top:648px" width="22" height="20" viewBox="0 0 22 20">
<rect x="1.1" y="1.3" width="6.5" height="6.6" rx="1.3" fill="#fff"/>
<rect x="10.15" y="2.25" width="9" height="5" rx="1.5" fill="none" stroke="#fff" stroke-width="1.3"/>
<rect x="1.1" y="9.8" width="10.3" height="8.7" rx="1.3" fill="#fff"/>
<rect x="12.9" y="9.8" width="7.2" height="6.2" rx="1.3" fill="#fff"/>
</svg>
<div class="t thin" style="left:1032.80px;top:642.55px;font-size:13px;font-weight:700;color:#333333;letter-spacing:0.281px;">Workloads Running</div>
<div class="t thin" style="left:1032.80px;top:662.35px;font-size:13px;font-weight:400;color:#6a6a6a;letter-spacing:0.636px;">In Workspace</div>
<svg style="left:1278.5px;top:652px" width="10" height="19" viewBox="0 0 10 19"><path d="M0.5 0.3 H6.8 V18 H3 V3.5 H0.5 Z" fill="#0e1f78"/></svg>
<div class="b" style="left:983.2px;top:685.3px;width:316.5px;height:79.3px;background:#f9f9fa;border:1px solid #e2e3e8;border-radius:9px"></div>
<div class="t thin" style="left:993.60px;top:697.10px;font-size:12px;font-weight:700;color:#1a1a1a;letter-spacing:0.362px;">cuda-tezz</div>
<div class="b" style="left:994.2px;top:721px;width:100.4px;height:34px;background:#ffffff;border:1px solid #e3e3e6;border-radius:5px"></div>
<div class="t thin" style="left:1001.00px;top:731.35px;font-size:13px;font-weight:700;color:#3b72ee;letter-spacing:0.000px;">$</div>
<div class="t thin" style="left:1009.50px;top:731.35px;font-size:13px;font-weight:700;color:#444444;letter-spacing:0.333px;">3.83</div>
<div class="t thin" style="left:1043.20px;top:731.35px;font-size:13px;font-weight:400;color:#6a6a6a;letter-spacing:0.200px;">Utilized</div>
</body></html>
